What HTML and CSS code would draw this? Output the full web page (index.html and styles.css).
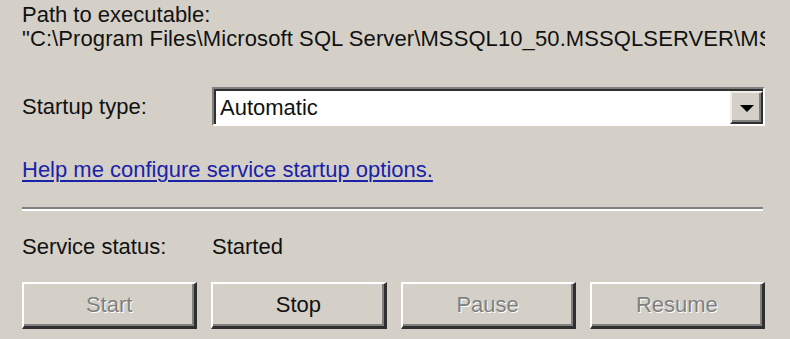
FILE: index.html
```html
<!DOCTYPE html>
<html lang="en">
<head>
    <meta charset="UTF-8">
    <title>Service Properties</title>
    <link rel="stylesheet" href="styles.css">
</head>
<body>

    <div class="panel">
        <div class="label-line">Path to executable:</div>
        <div class="path-line">"C:\Program Files\Microsoft SQL Server\MSSQL10_50.MSSQLSERVER\MSSQL\Binn\sqlservr.exe" -sMSSQLSERVER</div>

        <div class="field-row startup-row">
            <span class="field-label">Startup type:</span>
            <div class="combo">
                <span class="combo-value">Automatic</span>
                <span class="combo-button"><span class="arrow"></span></span>
            </div>
        </div>

        <a class="help-link" href="#">Help me configure service startup options.</a>

        <div class="separator"></div>

        <div class="field-row status-row">
            <span class="field-label">Service status:</span>
            <span>Started</span>
        </div>

        <div class="button-row">
            <button class="win-button" disabled>Start</button>
            <button class="win-button">Stop</button>
            <button class="win-button" disabled>Pause</button>
            <button class="win-button" disabled>Resume</button>
        </div>
    </div>

</body>
</html>
```

FILE: styles.css
```css
body {
    margin: 0;
    padding: 0;
    background-color: #d4d0c8;
    color: #111;
    font-family: 'Liberation Sans', Arial, sans-serif;
    font-size: 22px;
    line-height: 24px;
}

.panel {
    padding: 3px 25px 0 22px;
}

.path-line {
    white-space: nowrap;
    overflow: hidden;
    letter-spacing: 0.1px;
}

.field-row {
    display: grid;
    grid-template-columns: 190px 1fr;
    align-items: center;
}

.startup-row {
    margin-top: 36px;
}

.field-label {
    display: block;
}

.combo {
    display: flex;
    align-items: center;
    height: 39px;
    background-color: #fff;
    border-top: 2px solid #808080;
    border-left: 2px solid #808080;
    border-bottom: 2px solid #fff;
    border-right: 2px solid #fff;
    box-shadow: inset 2px 2px 0 #303030;
    box-sizing: border-box;
    padding: 2px 0 0 6px;
}

.combo-value {
    flex: 1;
}

.combo-button {
    display: flex;
    align-items: center;
    justify-content: center;
    width: 33px;
    height: 33px;
    box-sizing: border-box;
    background-color: #d4d0c8;
    border-top: 2px solid #eeeeea;
    border-left: 2px solid #eeeeea;
    border-right: 2px solid #303030;
    border-bottom: 2px solid #303030;
    box-shadow: inset -2px -2px 0 #808080;
}

.arrow {
    width: 0;
    height: 0;
    border-left: 7px solid transparent;
    border-right: 7px solid transparent;
    border-top: 7px solid #000;
    margin-top: 1px;
}

.help-link {
    display: inline-block;
    margin-top: 32px;
    color: #1a22a8;
    text-decoration: underline;
    text-underline-offset: 3px;
    text-decoration-thickness: 2px;
}

.separator {
    margin-top: 25px;
    margin-right: 2px;
    border-top: 2px solid #808080;
    border-bottom: 2px solid #fff;
    box-sizing: border-box;
    height: 4px;
}

.status-row {
    margin-top: 24px;
}

.button-row {
    display: grid;
    grid-template-columns: repeat(4, 1fr);
    gap: 14px;
    margin-top: 23px;
}

.win-button {
    height: 47px;
    font-family: inherit;
    font-size: 22px;
    color: #111;
    background-color: #d4d0c8;
    border-top: 2px solid #fff;
    border-left: 2px solid #fff;
    border-right: 3px solid #303030;
    border-bottom: 3px solid #303030;
    box-shadow: inset -2px -2px 0 #808080;
    padding: 0;
}

.win-button:disabled {
    color: #808080;
    text-shadow: 1px 1px 0 #fff;
}
```
